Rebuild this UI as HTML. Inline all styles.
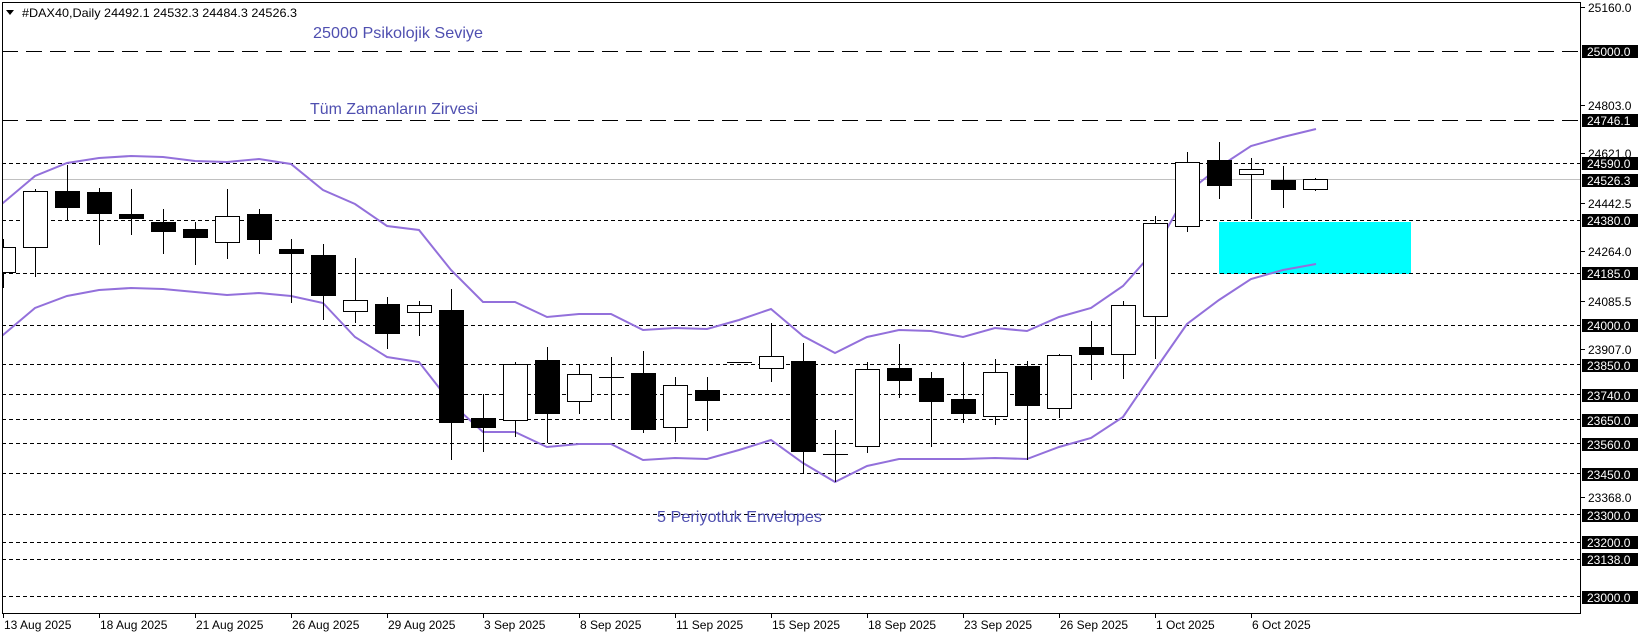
<!DOCTYPE html>
<html><head><meta charset="utf-8"><style>
html,body{margin:0;padding:0;background:#fff;width:1644px;height:637px;overflow:hidden}
svg{display:block}
text{font-family:"Liberation Sans","DejaVu Sans",sans-serif}
</style></head><body>
<svg width="1644" height="637" viewBox="0 0 1644 637" xmlns="http://www.w3.org/2000/svg">
<rect width="1644" height="637" fill="#fff"/>
<rect x="1219" y="222" width="192" height="52" fill="#00ffff"/>
<g stroke="#000" stroke-width="1" shape-rendering="crispEdges">
<line x1="2" x2="1580" y1="51.5" y2="51.5" stroke-dasharray="16,8"/>
<line x1="2" x2="1580" y1="120.5" y2="120.5" stroke-dasharray="16,8"/>
<g stroke-dasharray="4,3">
<line x1="2" x2="1580" y1="163.5" y2="163.5"/>
<line x1="2" x2="1580" y1="220.5" y2="220.5"/>
<line x1="2" x2="1580" y1="273.5" y2="273.5"/>
<line x1="2" x2="1580" y1="325.5" y2="325.5"/>
<line x1="2" x2="1580" y1="364.5" y2="364.5"/>
<line x1="2" x2="1580" y1="394.5" y2="394.5"/>
<line x1="2" x2="1580" y1="419.5" y2="419.5"/>
<line x1="2" x2="1580" y1="443.5" y2="443.5"/>
<line x1="2" x2="1580" y1="473.5" y2="473.5"/>
<line x1="2" x2="1580" y1="514.5" y2="514.5"/>
<line x1="2" x2="1580" y1="542.5" y2="542.5"/>
<line x1="2" x2="1580" y1="559.5" y2="559.5"/>
<line x1="2" x2="1580" y1="596.5" y2="596.5"/>
</g>
</g>
<line x1="2" x2="1580" y1="179.5" y2="179.5" stroke="#c0c0c0" shape-rendering="crispEdges"/>
<g fill="none" stroke="#9370db" stroke-width="2">
<polyline points="0,205 3,203 35,176 67,163 99,158 131,156 163,157 195,161 227,162 259,159 291,164 323,190 355,204 387,226 419,230 451,270 483,302 515,302 547,317 579,314 611,314 643,330 675,328 707,329 739,320 771,309 803,336 835,353 867,337 899,330 931,331 963,337 995,328 1027,331 1059,317 1091,308 1123,286 1155,250 1187,193 1219,167 1251,146 1283,137 1316,129"/>
<polyline points="0,337 3,335 35,308 67,296 99,290 131,288 163,289 195,292 227,295 259,293 291,296 323,303 355,337 387,357 419,362 451,403 483,432 515,432 547,447 579,444 611,444 643,460 675,458 707,459 739,450 771,440 803,463 835,482 867,466 899,459 931,459 963,459 995,458 1027,459 1059,447 1091,438 1123,417 1155,370 1187,324 1219,300 1251,279 1283,270 1316,264"/>
</g>
<g stroke="#000" stroke-width="1" shape-rendering="crispEdges">
<line x1="3.5" x2="3.5" y1="239" y2="288"/><rect x="-8.5" y="247.5" width="24" height="25" fill="#fff"/>
<line x1="35.5" x2="35.5" y1="189" y2="277"/><rect x="23.5" y="191.5" width="24" height="56" fill="#fff"/>
<line x1="67.5" x2="67.5" y1="165" y2="221"/><rect x="55.5" y="191.5" width="24" height="16" fill="#000"/>
<line x1="99.5" x2="99.5" y1="188" y2="245"/><rect x="87.5" y="192.5" width="24" height="21" fill="#000"/>
<line x1="131.5" x2="131.5" y1="189" y2="235"/><rect x="119.5" y="214.5" width="24" height="4" fill="#000"/>
<line x1="163.5" x2="163.5" y1="209" y2="254"/><rect x="151.5" y="222.5" width="24" height="9" fill="#000"/>
<line x1="195.5" x2="195.5" y1="222" y2="265"/><rect x="183.5" y="229.5" width="24" height="8" fill="#000"/>
<line x1="227.5" x2="227.5" y1="189" y2="259"/><rect x="215.5" y="216.5" width="24" height="26" fill="#fff"/>
<line x1="259.5" x2="259.5" y1="209" y2="254"/><rect x="247.5" y="214.5" width="24" height="25" fill="#000"/>
<line x1="291.5" x2="291.5" y1="239" y2="303"/><rect x="279.5" y="249.5" width="24" height="4" fill="#000"/>
<line x1="323.5" x2="323.5" y1="244" y2="320"/><rect x="311.5" y="255.5" width="24" height="40" fill="#000"/>
<line x1="355.5" x2="355.5" y1="258" y2="323"/><rect x="343.5" y="300.5" width="24" height="11" fill="#fff"/>
<line x1="387.5" x2="387.5" y1="297" y2="349"/><rect x="375.5" y="304.5" width="24" height="29" fill="#000"/>
<line x1="419.5" x2="419.5" y1="301" y2="336"/><rect x="407.5" y="305.5" width="24" height="7" fill="#fff"/>
<line x1="451.5" x2="451.5" y1="289" y2="460"/><rect x="439.5" y="310.5" width="24" height="112" fill="#000"/>
<line x1="483.5" x2="483.5" y1="394" y2="452"/><rect x="471.5" y="418.5" width="24" height="9" fill="#000"/>
<line x1="515.5" x2="515.5" y1="362" y2="437"/><rect x="503.5" y="364.5" width="24" height="56" fill="#fff"/>
<line x1="547.5" x2="547.5" y1="347" y2="443"/><rect x="535.5" y="360.5" width="24" height="53" fill="#000"/>
<line x1="579.5" x2="579.5" y1="364" y2="414"/><rect x="567.5" y="374.5" width="24" height="27" fill="#fff"/>
<line x1="611.5" x2="611.5" y1="357" y2="419"/><line x1="599" x2="624" y1="377.5" y2="377.5"/>
<line x1="643.5" x2="643.5" y1="351" y2="433"/><rect x="631.5" y="373.5" width="24" height="56" fill="#000"/>
<line x1="675.5" x2="675.5" y1="377" y2="442"/><rect x="663.5" y="385.5" width="24" height="42" fill="#fff"/>
<line x1="707.5" x2="707.5" y1="377" y2="431"/><rect x="695.5" y="390.5" width="24" height="10" fill="#000"/>
<line x1="727" x2="752" y1="362.5" y2="362.5"/>
<line x1="771.5" x2="771.5" y1="323" y2="382"/><rect x="759.5" y="356.5" width="24" height="12" fill="#fff"/>
<line x1="803.5" x2="803.5" y1="343" y2="473"/><rect x="791.5" y="361.5" width="24" height="90" fill="#000"/>
<line x1="835.5" x2="835.5" y1="430" y2="482"/><line x1="823" x2="848" y1="454.5" y2="454.5"/>
<line x1="867.5" x2="867.5" y1="362" y2="453"/><rect x="855.5" y="369.5" width="24" height="77" fill="#fff"/>
<line x1="899.5" x2="899.5" y1="344" y2="398"/><rect x="887.5" y="368.5" width="24" height="12" fill="#000"/>
<line x1="931.5" x2="931.5" y1="372" y2="447"/><rect x="919.5" y="378.5" width="24" height="23" fill="#000"/>
<line x1="963.5" x2="963.5" y1="362" y2="423"/><rect x="951.5" y="399.5" width="24" height="14" fill="#000"/>
<line x1="995.5" x2="995.5" y1="359" y2="425"/><rect x="983.5" y="372.5" width="24" height="44" fill="#fff"/>
<line x1="1027.5" x2="1027.5" y1="361" y2="460"/><rect x="1015.5" y="366.5" width="24" height="39" fill="#000"/>
<line x1="1059.5" x2="1059.5" y1="354" y2="418"/><rect x="1047.5" y="355.5" width="24" height="53" fill="#fff"/>
<line x1="1091.5" x2="1091.5" y1="321" y2="380"/><rect x="1079.5" y="347.5" width="24" height="7" fill="#000"/>
<line x1="1123.5" x2="1123.5" y1="301" y2="379"/><rect x="1111.5" y="305.5" width="24" height="49" fill="#fff"/>
<line x1="1155.5" x2="1155.5" y1="216" y2="359"/><rect x="1143.5" y="223.5" width="24" height="93" fill="#fff"/>
<line x1="1187.5" x2="1187.5" y1="152" y2="232"/><rect x="1175.5" y="162.5" width="24" height="64" fill="#fff"/>
<line x1="1219.5" x2="1219.5" y1="142" y2="199"/><rect x="1207.5" y="160.5" width="24" height="25" fill="#000"/>
<line x1="1251.5" x2="1251.5" y1="158" y2="219"/><rect x="1239.5" y="169.5" width="24" height="5" fill="#fff"/>
<line x1="1283.5" x2="1283.5" y1="166" y2="208"/><rect x="1271.5" y="180.5" width="24" height="9" fill="#000"/>
<line x1="1315.5" x2="1315.5" y1="178" y2="191"/><rect x="1303.5" y="179.5" width="24" height="10" fill="#fff"/>
</g>
<rect x="0" y="0" width="2" height="637" fill="#fff"/>
<rect x="2.5" y="2.5" width="1578" height="611" fill="none" stroke="#000" shape-rendering="crispEdges"/>
<polygon points="6,10 14,10 10,15" fill="#000"/>
<text x="22" y="17" font-size="12" fill="#000" textLength="275" lengthAdjust="spacingAndGlyphs">#DAX40,Daily  24492.1 24532.3 24484.3 24526.3</text>
<g fill="#4f4fb0" font-size="16">
<text x="313" y="38" textLength="170" lengthAdjust="spacingAndGlyphs">25000 Psikolojik Seviye</text>
<text x="310" y="114" textLength="168" lengthAdjust="spacingAndGlyphs">Tüm Zamanların Zirvesi</text>
<text x="657" y="522" textLength="165" lengthAdjust="spacingAndGlyphs">5 Periyotluk Envelopes</text>
</g>
<g stroke="#000" shape-rendering="crispEdges">
<line x1="1580" x2="1585" y1="7.5" y2="7.5"/><line x1="1580" x2="1585" y1="105.5" y2="105.5"/><line x1="1580" x2="1585" y1="153.5" y2="153.5"/><line x1="1580" x2="1585" y1="203.5" y2="203.5"/><line x1="1580" x2="1585" y1="251.5" y2="251.5"/><line x1="1580" x2="1585" y1="301.5" y2="301.5"/><line x1="1580" x2="1585" y1="349.5" y2="349.5"/><line x1="1580" x2="1585" y1="497.5" y2="497.5"/>
</g>
<g font-size="12" fill="#000">
<text x="1588" y="12">25160.0</text><text x="1588" y="110">24803.0</text><text x="1588" y="158">24621.0</text><text x="1588" y="208">24442.5</text><text x="1588" y="256">24264.0</text><text x="1588" y="306">24085.5</text><text x="1588" y="354">23907.0</text><text x="1588" y="502">23368.0</text>
</g>
<g fill="#000">
<rect x="1582" y="45" width="56" height="13"/><rect x="1582" y="114" width="56" height="13"/><rect x="1582" y="157" width="56" height="13"/><rect x="1582" y="174" width="56" height="13"/><rect x="1582" y="214" width="56" height="13"/><rect x="1582" y="267" width="56" height="13"/><rect x="1582" y="319" width="56" height="13"/><rect x="1582" y="359" width="56" height="13"/><rect x="1582" y="389" width="56" height="13"/><rect x="1582" y="414" width="56" height="13"/><rect x="1582" y="438" width="56" height="13"/><rect x="1582" y="468" width="56" height="13"/><rect x="1582" y="509" width="56" height="13"/><rect x="1582" y="536" width="56" height="13"/><rect x="1582" y="553" width="56" height="13"/><rect x="1582" y="591" width="56" height="13"/>
</g>
<g font-size="12" fill="#fff">
<text x="1587" y="56">25000.0</text><text x="1587" y="125">24746.1</text><text x="1587" y="168">24590.0</text><text x="1587" y="185">24526.3</text><text x="1587" y="225">24380.0</text><text x="1587" y="278">24185.0</text><text x="1587" y="330">24000.0</text><text x="1587" y="370">23850.0</text><text x="1587" y="400">23740.0</text><text x="1587" y="425">23650.0</text><text x="1587" y="449">23560.0</text><text x="1587" y="479">23450.0</text><text x="1587" y="520">23300.0</text><text x="1587" y="547">23200.0</text><text x="1587" y="564">23138.0</text><text x="1587" y="602">23000.0</text>
</g>
<g stroke="#000" shape-rendering="crispEdges">
<line x1="3.5" x2="3.5" y1="613" y2="618"/><line x1="99.5" x2="99.5" y1="613" y2="618"/><line x1="195.5" x2="195.5" y1="613" y2="618"/><line x1="291.5" x2="291.5" y1="613" y2="618"/><line x1="387.5" x2="387.5" y1="613" y2="618"/><line x1="483.5" x2="483.5" y1="613" y2="618"/><line x1="579.5" x2="579.5" y1="613" y2="618"/><line x1="675.5" x2="675.5" y1="613" y2="618"/><line x1="771.5" x2="771.5" y1="613" y2="618"/><line x1="867.5" x2="867.5" y1="613" y2="618"/><line x1="963.5" x2="963.5" y1="613" y2="618"/><line x1="1059.5" x2="1059.5" y1="613" y2="618"/><line x1="1155.5" x2="1155.5" y1="613" y2="618"/><line x1="1251.5" x2="1251.5" y1="613" y2="618"/>
</g>
<g font-size="12" fill="#000">
<text x="4" y="629">13 Aug 2025</text><text x="100" y="629">18 Aug 2025</text><text x="196" y="629">21 Aug 2025</text><text x="292" y="629">26 Aug 2025</text><text x="388" y="629">29 Aug 2025</text><text x="484" y="629">3 Sep 2025</text><text x="580" y="629">8 Sep 2025</text><text x="676" y="629">11 Sep 2025</text><text x="772" y="629">15 Sep 2025</text><text x="868" y="629">18 Sep 2025</text><text x="964" y="629">23 Sep 2025</text><text x="1060" y="629">26 Sep 2025</text><text x="1156" y="629">1 Oct 2025</text><text x="1252" y="629">6 Oct 2025</text>
</g>
</svg>
</body></html>
